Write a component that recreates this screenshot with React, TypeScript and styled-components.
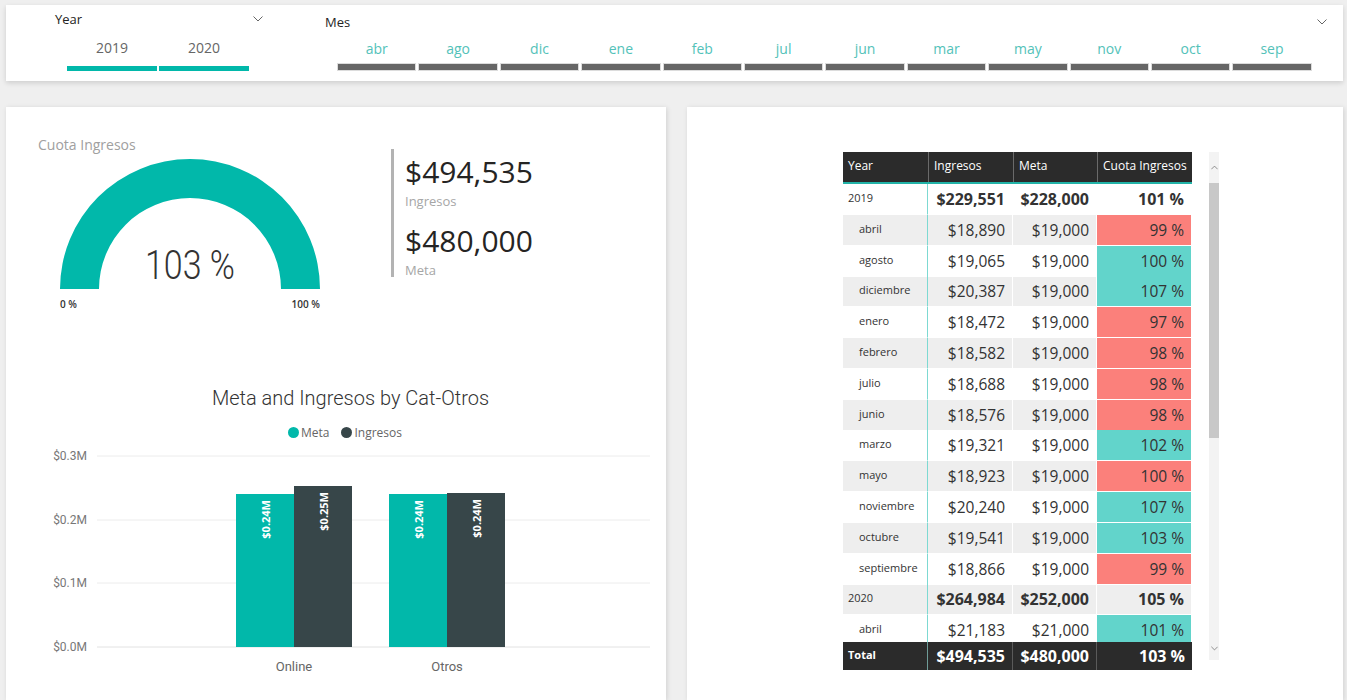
import styled, { createGlobalStyle } from "styled-components";

const GlobalStyle = createGlobalStyle`
  html, body {
    margin: 0;
    padding: 0;
    overflow: hidden;
  }
  body {
    background: #efefef;
    font-family: "Segoe UI", "Open Sans", sans-serif;
    color: #252423;
  }
`;

const TEAL = "#01b8aa";
const DARK = "#374649";

const Page = styled.div`
  height: 700px;
  box-sizing: border-box;
  padding: 5px 4px 0 6px;
  display: flex;
  flex-direction: column;
  gap: 26px;
`;

/* ---------- slicer bar ---------- */

const SlicerBar = styled.section`
  height: 76px;
  flex: none;
  box-sizing: border-box;
  background: #fff;
  box-shadow: 0 2px 5px rgba(0, 0, 0, 0.14);
  display: flex;
  gap: 59px;
  padding: 4px 0 0 49px;
`;

const Slicer = styled.div<{ $width: number }>`
  width: ${(p) => p.$width}px;
  display: flex;
  flex-direction: column;
`;

const SlicerHeader = styled.div<{ $offset: number }>`
  height: 20px;
  margin-top: ${(p) => p.$offset}px;
  padding-right: 3px;
  display: flex;
  align-items: center;
  justify-content: space-between;
  font-size: 13px;
  color: #252423;
`;

const TileGrid = styled.div<{ $cols: string; $top: number; $inset: number }>`
  display: grid;
  grid-template-columns: ${(p) => p.$cols};
  column-gap: 2px;
  margin-top: ${(p) => p.$top}px;
  padding-left: ${(p) => p.$inset}px;
`;

const Tile = styled.div`
  display: flex;
  flex-direction: column;
  align-items: center;
`;

const TileLabel = styled.span<{ $selected?: boolean }>`
  font-size: 14px;
  line-height: 20px;
  color: ${(p) => (p.$selected ? "#666" : "#53c2b9")};
`;

const TileBar = styled.div<{ $selected?: boolean }>`
  align-self: stretch;
  box-sizing: border-box;
  height: ${(p) => (p.$selected ? 5 : 8)}px;
  margin-top: ${(p) => (p.$selected ? 8 : 4)}px;
  background: ${(p) => (p.$selected ? TEAL : "#666")};
  border: ${(p) => (p.$selected ? "none" : "1px solid #dcdcdc")};
`;

const Chevron = ({ up = false }: { up?: boolean }) => (
  <svg width="10" height="6" viewBox="0 0 10 6">
    <polyline
      points={up ? "0.5,5.5 5,1 9.5,5.5" : "0.5,0.5 5,5 9.5,0.5"}
      fill="none"
      stroke="#666"
      strokeWidth="1"
    />
  </svg>
);

/* ---------- cards ---------- */

const CardRow = styled.div`
  flex: 1;
  display: grid;
  grid-template-columns: 660px 656px;
  column-gap: 21px;
`;

const Card = styled.section`
  background: #fff;
  box-shadow: 1px 1px 5px rgba(0, 0, 0, 0.13);
  overflow: hidden;
`;

const LeftCard = styled(Card)`
  display: flex;
  flex-direction: column;
`;

const TopRow = styled.div`
  display: flex;
  height: 278px;
  flex: none;
`;

const GaugeBlock = styled.div`
  width: 385px;
  box-sizing: border-box;
  padding: 30px 0 0 32px;
`;

const GaugeTitle = styled.div`
  font-size: 14px;
  line-height: 16px;
  color: #a0a0a0;
`;

const GaugeWrap = styled.div`
  width: 260px;
  margin: 6px 0 0 22px;
`;

const GaugeScale = styled.div`
  display: flex;
  justify-content: space-between;
  margin-top: 9px;
  font-size: 10px;
  line-height: 12px;
  font-weight: 600;
  color: #333;
`;

const Kpi = styled.div`
  height: 128px;
  margin-top: 42px;
  box-sizing: border-box;
  border-left: 3px solid #b3b3b3;
  padding: 5px 0 0 11px;
`;

const KpiValue = styled.div<{ $gap?: number }>`
  font-size: 30px;
  line-height: 36px;
  margin-top: ${(p) => p.$gap ?? 0}px;
  color: #252423;
`;

const KpiLabel = styled.div`
  font-size: 13px;
  line-height: 20px;
  padding-top: 1px;
  color: #a6a6a6;
`;

const ChartTitle = styled.div`
  font-family: Roboto, "Open Sans", sans-serif;
  font-weight: 300;
  font-size: 20px;
  line-height: 26px;
  text-align: center;
  padding-left: 29px;
  color: #333;
`;

const Legend = styled.div`
  display: flex;
  justify-content: center;
  gap: 12px;
  height: 16px;
  margin-top: 13px;
  padding-left: 18px;
  font-size: 12px;
  color: #666;
`;

const LegendItem = styled.span`
  display: flex;
  align-items: center;
  gap: 2px;
`;

const Dot = styled.span<{ $color: string }>`
  width: 11px;
  height: 11px;
  border-radius: 50%;
  background: ${(p) => p.$color};
`;

const ChartSvg = styled.svg`
  display: block;
  margin-top: 3px;
  font-family: Roboto, "Open Sans", sans-serif;
`;

/* ---------- matrix ---------- */

const RightCard = styled(Card)`
  display: flex;
  align-items: flex-start;
  padding: 45px 0 0 156px;
`;

const Matrix = styled.div`
  width: 349px;
  display: flex;
  flex-direction: column;
`;

const COLS = "85px 85px 84px 95px";

const HeadRow = styled.div`
  display: grid;
  grid-template-columns: ${COLS};
  height: 32px;
  box-sizing: border-box;
  background: #2b2b2b;
  border-bottom: 2px solid #22b3a8;
`;

const HeadCell = styled.div<{ $first?: boolean }>`
  padding-left: 5px;
  line-height: 28px;
  font-size: 12px;
  color: #fff;
  border-left: ${(p) => (p.$first ? "none" : "1px solid #6a6a6a")};
  white-space: nowrap;
`;

const Body = styled.div`
  height: 458px;
  overflow: hidden;
`;

const Row = styled.div<{ $shade: boolean }>`
  display: grid;
  grid-template-columns: ${COLS};
  height: 30.8px;
  background: ${(p) => (p.$shade ? "#eeeeee" : "#fff")};
`;

const NameCell = styled.div<{ $indent: boolean }>`
  box-sizing: border-box;
  padding: 6px 0 0 ${(p) => (p.$indent ? 16 : 5)}px;
  font-size: 11px;
  line-height: 16px;
  color: #333;
  border-right: 1px solid #7dd9d2;
  border-bottom: 1px solid #fff;
`;

const NumCell = styled.div<{ $bold: boolean; $fill?: string }>`
  box-sizing: border-box;
  padding-right: 7px;
  text-align: right;
  font-size: ${(p) => (p.$bold ? 16 : 15.5)}px;
  font-weight: ${(p) => (p.$bold ? 700 : 400)};
  line-height: 30px;
  color: #333;
  background: ${(p) => p.$fill ?? "transparent"};
  border-right: 1px solid #fff;
  border-bottom: 1px solid #fff;
  white-space: nowrap;
`;

const TotalRow = styled.div`
  display: grid;
  grid-template-columns: ${COLS};
  height: 28px;
  background: #2b2b2b;
  color: #fff;
`;

const TotalLabel = styled.div`
  padding: 5px 0 0 5px;
  font-size: 11px;
  line-height: 16px;
  font-weight: 700;
  border-right: 1px solid #6f9c98;
`;

const TotalNum = styled.div<{ $last?: boolean }>`
  padding-right: 7px;
  text-align: right;
  font-size: 16px;
  font-weight: 700;
  line-height: 28px;
  border-right: ${(p) => (p.$last ? "none" : "1px solid #5a5a5a")};
  white-space: nowrap;
`;

const ScrollTrack = styled.div`
  width: 10px;
  height: 508px;
  margin-left: 17px;
  background: #f3f3f3;
  display: flex;
  flex-direction: column;
  align-items: stretch;
`;

const ScrollArrow = styled.div<{ $h: number }>`
  height: ${(p) => p.$h}px;
  display: flex;
  align-items: center;
  justify-content: center;
  svg {
    width: 7px;
    height: 5px;
  }
`;

const ScrollThumb = styled.div`
  height: 255px;
  background: #c8c8c8;
`;

const ScrollSpacer = styled.div`
  flex: 1;
`;

/* ---------- data ---------- */

const years = ["2019", "2020"];
const months = ["abr", "ago", "dic", "ene", "feb", "jul", "jun", "mar", "may", "nov", "oct", "sep"];

type Line = {
  name: string;
  ingresos: string;
  meta: string;
  cuota: string;
  year?: boolean;
  status?: "low" | "ok";
};

const lines: Line[] = [
  { name: "2019", ingresos: "$229,551", meta: "$228,000", cuota: "101 %", year: true },
  { name: "abril", ingresos: "$18,890", meta: "$19,000", cuota: "99 %", status: "low" },
  { name: "agosto", ingresos: "$19,065", meta: "$19,000", cuota: "100 %", status: "ok" },
  { name: "diciembre", ingresos: "$20,387", meta: "$19,000", cuota: "107 %", status: "ok" },
  { name: "enero", ingresos: "$18,472", meta: "$19,000", cuota: "97 %", status: "low" },
  { name: "febrero", ingresos: "$18,582", meta: "$19,000", cuota: "98 %", status: "low" },
  { name: "julio", ingresos: "$18,688", meta: "$19,000", cuota: "98 %", status: "low" },
  { name: "junio", ingresos: "$18,576", meta: "$19,000", cuota: "98 %", status: "low" },
  { name: "marzo", ingresos: "$19,321", meta: "$19,000", cuota: "102 %", status: "ok" },
  { name: "mayo", ingresos: "$18,923", meta: "$19,000", cuota: "100 %", status: "low" },
  { name: "noviembre", ingresos: "$20,240", meta: "$19,000", cuota: "107 %", status: "ok" },
  { name: "octubre", ingresos: "$19,541", meta: "$19,000", cuota: "103 %", status: "ok" },
  { name: "septiembre", ingresos: "$18,866", meta: "$19,000", cuota: "99 %", status: "low" },
  { name: "2020", ingresos: "$264,984", meta: "$252,000", cuota: "105 %", year: true },
  { name: "abril", ingresos: "$21,183", meta: "$21,000", cuota: "101 %", status: "ok" },
];

const statusFill = { low: "#fb807b", ok: "#62d4cb" };

const ticks = [
  { label: "$0.3M", y: 13 },
  { label: "$0.2M", y: 77 },
  { label: "$0.1M", y: 140 },
  { label: "$0.0M", y: 204 },
];

const bars = [
  { x: 230, h: 153, color: TEAL, label: "$0.24M" },
  { x: 288, h: 161, color: DARK, label: "$0.25M" },
  { x: 383, h: 153, color: TEAL, label: "$0.24M" },
  { x: 441, h: 154, color: DARK, label: "$0.24M" },
];

const BASE = 204;

function Gauge() {
  return (
    <svg width="260" height="130" viewBox="0 0 260 130" style={{ display: "block", overflow: "visible" }}>
      <path d="M0,130 A130,130 0 0 1 260,130 L221,130 A91,91 0 0 0 39,130 Z" fill={TEAL} />
      <text
        x="130"
        y="120"
        textAnchor="middle"
        textLength="90"
        lengthAdjust="spacingAndGlyphs"
        fontFamily="Roboto, sans-serif"
        fontWeight="300"
        fontSize="40"
        fill="#333"
      >
        103 %
      </text>
    </svg>
  );
}

function BarChart() {
  return (
    <ChartSvg width="660" height="240" viewBox="0 0 660 240">
      {ticks.map((t) => (
        <g key={t.label}>
          <line x1="91" x2="644" y1={t.y} y2={t.y} stroke={t.y === BASE ? "#e2e2e2" : "#ececec"} strokeWidth="1" />
          <text x="81" y={t.y} textAnchor="end" dominantBaseline="central" fontSize="12" fill="#777">
            {t.label}
          </text>
        </g>
      ))}
      {bars.map((b, i) => (
        <g key={i}>
          <rect x={b.x} y={BASE - b.h} width="58" height={b.h} fill={b.color} />
          <text
            transform={`translate(${b.x + 29}, ${BASE - b.h + 6}) rotate(-90)`}
            textAnchor="end"
            dominantBaseline="central"
            fontFamily="'Open Sans', sans-serif"
            fontWeight="700"
            fontSize="11"
            fill="#fff"
          >
            {b.label}
          </text>
        </g>
      ))}
      <text x="288" y="223" textAnchor="middle" dominantBaseline="central" fontSize="13" fill="#666">
        Online
      </text>
      <text x="441" y="223" textAnchor="middle" dominantBaseline="central" fontSize="13" fill="#666">
        Otros
      </text>
    </ChartSvg>
  );
}

export default function App() {
  return (
    <>
      <GlobalStyle />
      <Page>
        <SlicerBar>
          <Slicer $width={211}>
            <SlicerHeader $offset={0}>
              <span>Year</span>
              <Chevron />
            </SlicerHeader>
            <TileGrid $cols="90px 90px" $top={9} $inset={12}>
              {years.map((y) => (
                <Tile key={y}>
                  <TileLabel $selected>{y}</TileLabel>
                  <TileBar $selected />
                </Tile>
              ))}
            </TileGrid>
          </Slicer>
          <Slicer $width={1005}>
            <SlicerHeader $offset={3}>
              <span>Mes</span>
              <Chevron />
            </SlicerHeader>
            <TileGrid $cols="repeat(12, 79.4px)" $top={7} $inset={12}>
              {months.map((m) => (
                <Tile key={m}>
                  <TileLabel>{m}</TileLabel>
                  <TileBar />
                </Tile>
              ))}
            </TileGrid>
          </Slicer>
        </SlicerBar>

        <CardRow>
          <LeftCard>
            <TopRow>
              <GaugeBlock>
                <GaugeTitle>Cuota Ingresos</GaugeTitle>
                <GaugeWrap>
                  <Gauge />
                  <GaugeScale>
                    <span>0 %</span>
                    <span>100 %</span>
                  </GaugeScale>
                </GaugeWrap>
              </GaugeBlock>
              <Kpi>
                <KpiValue>$494,535</KpiValue>
                <KpiLabel>Ingresos</KpiLabel>
                <KpiValue $gap={12}>$480,000</KpiValue>
                <KpiLabel>Meta</KpiLabel>
              </Kpi>
            </TopRow>
            <ChartTitle>Meta and Ingresos by Cat-Otros</ChartTitle>
            <Legend>
              <LegendItem>
                <Dot $color={TEAL} />
                Meta
              </LegendItem>
              <LegendItem>
                <Dot $color={DARK} />
                Ingresos
              </LegendItem>
            </Legend>
            <BarChart />
          </LeftCard>

          <RightCard>
            <Matrix>
              <HeadRow>
                <HeadCell $first>Year</HeadCell>
                <HeadCell>Ingresos</HeadCell>
                <HeadCell>Meta</HeadCell>
                <HeadCell>Cuota Ingresos</HeadCell>
              </HeadRow>
              <Body>
                {lines.map((l, i) => (
                  <Row key={i} $shade={i % 2 === 1}>
                    <NameCell $indent={!l.year}>{l.name}</NameCell>
                    <NumCell $bold={!!l.year}>{l.ingresos}</NumCell>
                    <NumCell $bold={!!l.year}>{l.meta}</NumCell>
                    <NumCell $bold={!!l.year} $fill={l.status ? statusFill[l.status] : undefined}>
                      {l.cuota}
                    </NumCell>
                  </Row>
                ))}
              </Body>
              <TotalRow>
                <TotalLabel>Total</TotalLabel>
                <TotalNum>$494,535</TotalNum>
                <TotalNum>$480,000</TotalNum>
                <TotalNum $last>103 %</TotalNum>
              </TotalRow>
            </Matrix>
            <ScrollTrack>
              <ScrollArrow $h={31}>
                <Chevron up />
              </ScrollArrow>
              <ScrollThumb />
              <ScrollSpacer />
              <ScrollArrow $h={24}>
                <Chevron />
              </ScrollArrow>
            </ScrollTrack>
          </RightCard>
        </CardRow>
      </Page>
    </>
  );
}
